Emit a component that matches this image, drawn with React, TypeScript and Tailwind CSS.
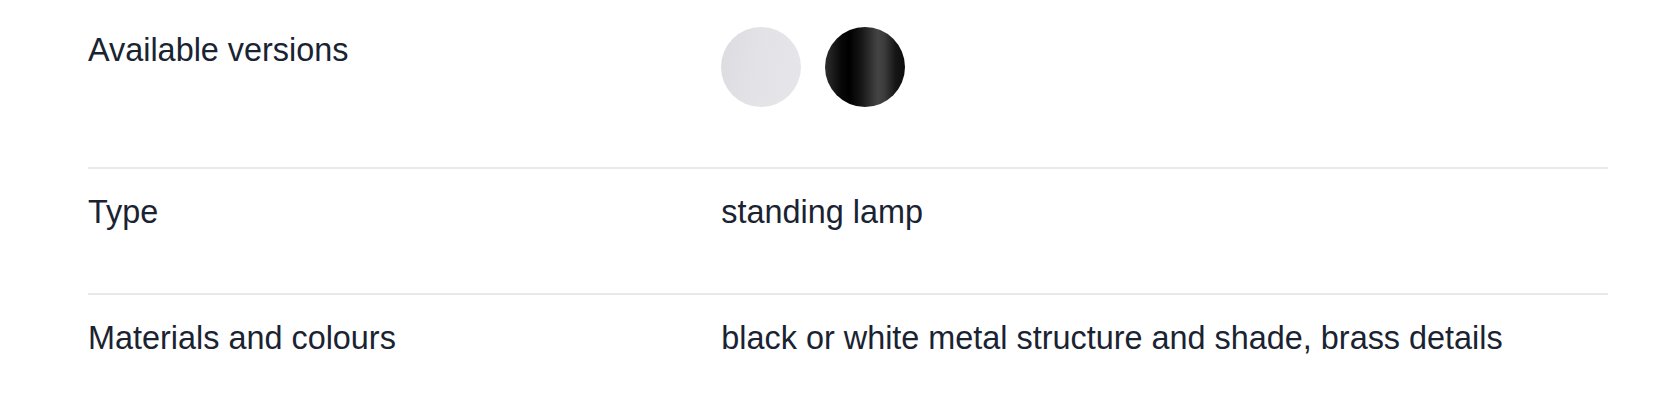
import React from "react";

type Spec = {
  label: string;
  value?: string;
  swatches?: boolean;
};

const specs: Spec[] = [
  { label: "Available versions", swatches: true },
  { label: "Type", value: "standing lamp" },
  { label: "Materials and colours", value: "black or white metal structure and shade, brass details" },
];

function Swatches() {
  return (
    <div className="flex gap-6">
      <span className="block h-20 w-20 rounded-full bg-[linear-gradient(100deg,#dcdce0_0%,#e3e3e7_45%,#e6e6ea_100%)]" />
      <span className="block h-20 w-20 rounded-full bg-[linear-gradient(90deg,#2e2e2e_0%,#080808_20%,#000000_30%,#161616_45%,#444444_66%,#3c3c3c_74%,#161616_88%,#0c0c0c_100%)]" />
    </div>
  );
}

export default function App() {
  return (
    <div className="min-h-[416px] bg-white pl-[88px] pr-[48px] font-['Liberation_Sans',Arial,sans-serif] text-[32.4px] leading-[40px] text-[#1a2332]">
      {specs.map((spec, i) => (
        <div
          key={spec.label}
          className={
            i === 0
              ? "grid grid-cols-12 pt-[27px] pb-[60px]"
              : "grid grid-cols-12 border-t-2 border-[#e8e9eb] pt-[23px] pb-[61px]"
          }
        >
          <div className={i === 0 ? "col-span-5 pt-[3px]" : "col-span-5"}>{spec.label}</div>
          <div className="col-span-7">{spec.swatches ? <Swatches /> : spec.value}</div>
        </div>
      ))}
    </div>
  );
}
